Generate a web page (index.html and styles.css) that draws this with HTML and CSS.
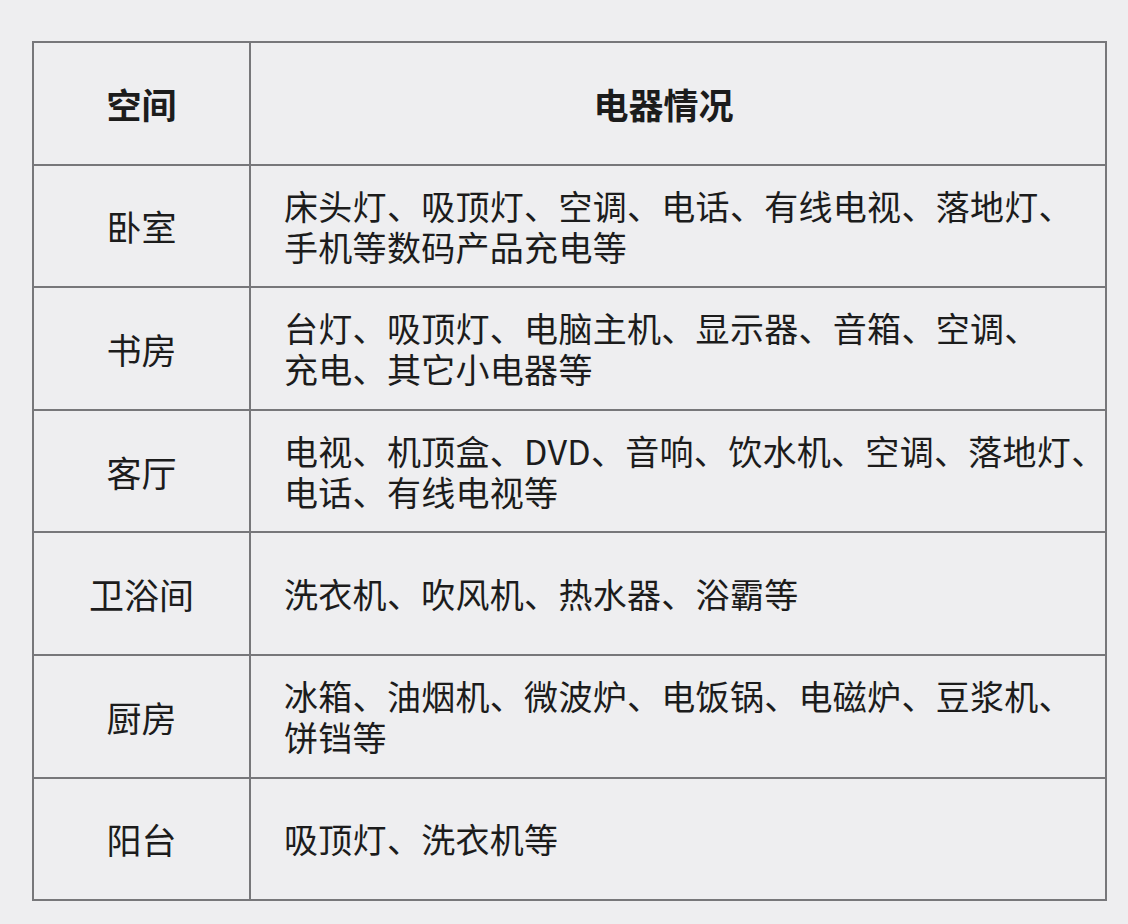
FILE: index.html
```html
<!DOCTYPE html>
<html lang="zh">
<head>
<meta charset="utf-8">
<link rel="stylesheet" href="styles.css">
</head>
<body>
<table class="grid">
  <colgroup><col class="c-space"><col class="c-items"></colgroup>
  <thead>
    <tr><th class="space">空间</th><th class="items">电器情况</th></tr>
  </thead>
  <tbody>
    <tr><td class="space">卧室</td><td class="items">床头灯、吸顶灯、空调、电话、有线电视、落地灯、<br>手机等数码产品充电等</td></tr>
    <tr><td class="space">书房</td><td class="items">台灯、吸顶灯、电脑主机、显示器、音箱、空调、<br>充电、其它小电器等</td></tr>
    <tr><td class="space">客厅</td><td class="items">电视、机顶盒、DVD、音响、饮水机、空调、落地灯、<br>电话、有线电视等</td></tr>
    <tr><td class="space">卫浴间</td><td class="items">洗衣机、吹风机、热水器、浴霸等</td></tr>
    <tr><td class="space">厨房</td><td class="items">冰箱、油烟机、微波炉、电饭锅、电磁炉、豆浆机、<br>饼铛等</td></tr>
    <tr><td class="space">阳台</td><td class="items">吸顶灯、洗衣机等</td></tr>
  </tbody>
</table>
</body>
</html>
```
FILE: styles.css
```css
html, body {
  margin: 0;
  padding: 0;
  background: #eeeef0;
}
body {
  padding: 41px 0 0 32px;
  font-family: "Noto Sans CJK SC", "Noto Sans", sans-serif;
  color: #1c1c1c;
}
.grid {
  border-collapse: collapse;
  table-layout: fixed;
  width: 1075px;
}
.c-space { width: 217px; }
.grid th, .grid td {
  border: 2px solid #77777a;
  height: 120.6px;
  padding: 0;
  vertical-align: middle;
}
.grid th {
  font-weight: 700;
  font-size: 35px;
  text-align: center;
}
.grid th.items {
  padding-right: 29px;
}
.grid td.space {
  text-align: center;
  font-size: 35px;
  font-weight: 400;
}
.grid td.items {
  font-size: 34px;
  line-height: 41px;
  padding-left: 33px;
  letter-spacing: 0.3px;
  white-space: nowrap;
}
```
